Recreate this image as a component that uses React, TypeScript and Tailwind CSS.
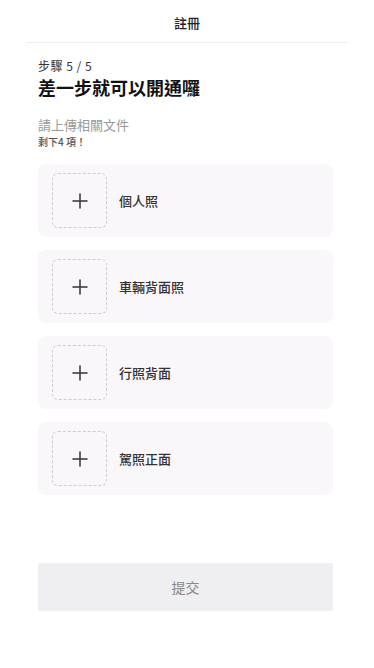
import React from 'react';
import { Plus } from 'lucide-react';

const documents = ['個人照', '車輛背面照', '行照背面', '駕照正面'];

const UploadCard: React.FC<{ label: string }> = ({ label }) => (
  <div className="flex h-[73px] items-center rounded-lg bg-[#faf7fa] pl-[14px]">
    <button className="flex h-[55px] w-[55px] items-center justify-center rounded-md border border-dashed border-[#d4c8d4]">
      <Plus size={24} strokeWidth={1.5} className="text-[#333]" />
    </button>
    <span className="ml-[12px] text-[13px] font-medium text-[#333]">{label}</span>
  </div>
);

const App: React.FC = () => {
  return (
    <div
      className="min-h-[668px] bg-white"
      style={{ fontFamily: '"Noto Sans CJK TC", "Noto Sans", sans-serif' }}
    >
      {/* Header */}
      <div className="flex h-[42px] items-center justify-center pt-[3px] text-[13px] font-medium text-[#222]">
        註冊
      </div>
      <div className="mx-[26px] h-px bg-[#eeeeee]" />

      <div className="pl-[38px] pr-[41px]">
        <div className="mt-[14px] text-[12px] leading-[18px] tracking-[0.5px] text-[#333]">步驟 5 / 5</div>
        <div className="text-[18px] font-bold leading-[24px] text-[#111]">差一步就可以開通囉</div>

        <div className="mt-[17px] text-[13px] leading-[18px] text-[#999]">請上傳相關文件</div>
        <div className="mt-[2px] text-[10px] font-medium leading-[12px] text-[#555]">剩下4 項！</div>

        {/* Upload list */}
        <div className="mt-[16px] flex flex-col gap-[13px]">
          {documents.map((d) => (
            <UploadCard key={d} label={d} />
          ))}
        </div>

        <button className="mt-[68px] flex h-[48px] w-full items-center justify-center rounded-[2px] bg-[#efeef0] text-[14px] text-[#888]">
          提交
        </button>
      </div>
    </div>
  );
};

export default App;
